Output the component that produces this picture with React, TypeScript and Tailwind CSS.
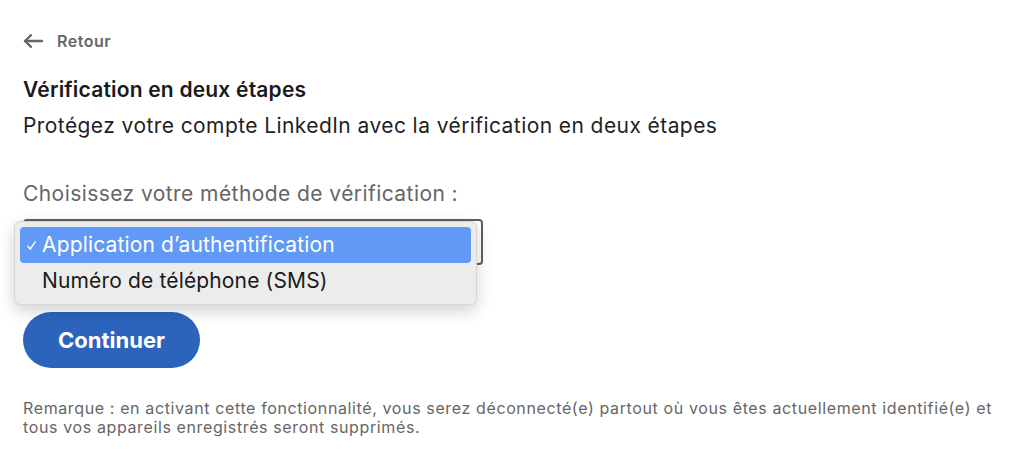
import React from "react";

export default function App() {
  return (
    <div className="w-[1024px] h-[465px] bg-white overflow-hidden px-[23px] font-['Inter',sans-serif]">
      <div className="pt-[31px] flex items-center h-[51px] gap-[14px] text-[#666666]">
        <svg width="20" height="14" viewBox="0 0 20 14" fill="none" stroke="#666666" strokeWidth="2.3" strokeLinecap="round" strokeLinejoin="round">
          <path d="M19 7H2" />
          <path d="M8 1.2L2 7l6 5.8" />
        </svg>
        <span className="text-[16px] font-semibold leading-[20px] tracking-[0.5px]">Retour</span>
      </div>
      <h1 className="mt-[27px] text-[21px] leading-[24px] font-semibold tracking-[0.2px] text-[#1a1a1a]">Vérification en deux étapes</h1>
      <p className="mt-[12px] text-[21px] leading-[24px] tracking-[0.42px] text-[#1f1f1f]">Protégez votre compte LinkedIn avec la vérification en deux étapes</p>
      <p className="mt-[44px] text-[21px] leading-[24px] tracking-[0.43px] text-[#666666]">Choisissez votre méthode de vérification :</p>
      <div className="relative mt-[13px] w-[460px] h-[46px] rounded-[4px] border-2 border-[#5e5e5e]">
        <div className="absolute left-[-11px] top-[0px] w-[463px] h-[84px] rounded-[6px] bg-[#ececec] border border-[#d6d6d6] shadow-[0_6px_16px_rgba(0,0,0,0.18)] p-[5px]">
          <div className="h-[36px] rounded-[4px] bg-[#6199f7] flex items-center text-white">
            <span className="w-[22px] pl-[7px] flex items-center">
              <svg width="9" height="9" viewBox="0 0 9 9" fill="none" stroke="#ffffff" strokeWidth="1.4" strokeLinecap="round" strokeLinejoin="round">
                <path d="M0.8 5.2L3.2 8L8.2 0.8" />
              </svg>
            </span>
            <span className="text-[21px] leading-[24px] tracking-[0.15px]">Application d’authentification</span>
          </div>
          <div className="h-[36px] flex items-center pl-[22px] text-[21px] leading-[24px] tracking-[0.15px] text-[#1a1a1a]">Numéro de téléphone (SMS)</div>
        </div>
      </div>
      <button className="mt-[47px] w-[177px] h-[56px] rounded-full bg-[#2c64bc] text-white text-[22px] font-bold">Continuer</button>
      <p className="mt-[31px] text-[16px] leading-[19px] tracking-[0.62px] text-[#666666] w-[985px]">
        Remarque : en activant cette fonctionnalité, vous serez déconnecté(e) partout où vous êtes actuellement identifié(e) et tous vos appareils enregistrés seront supprimés.
      </p>
    </div>
  );
}
